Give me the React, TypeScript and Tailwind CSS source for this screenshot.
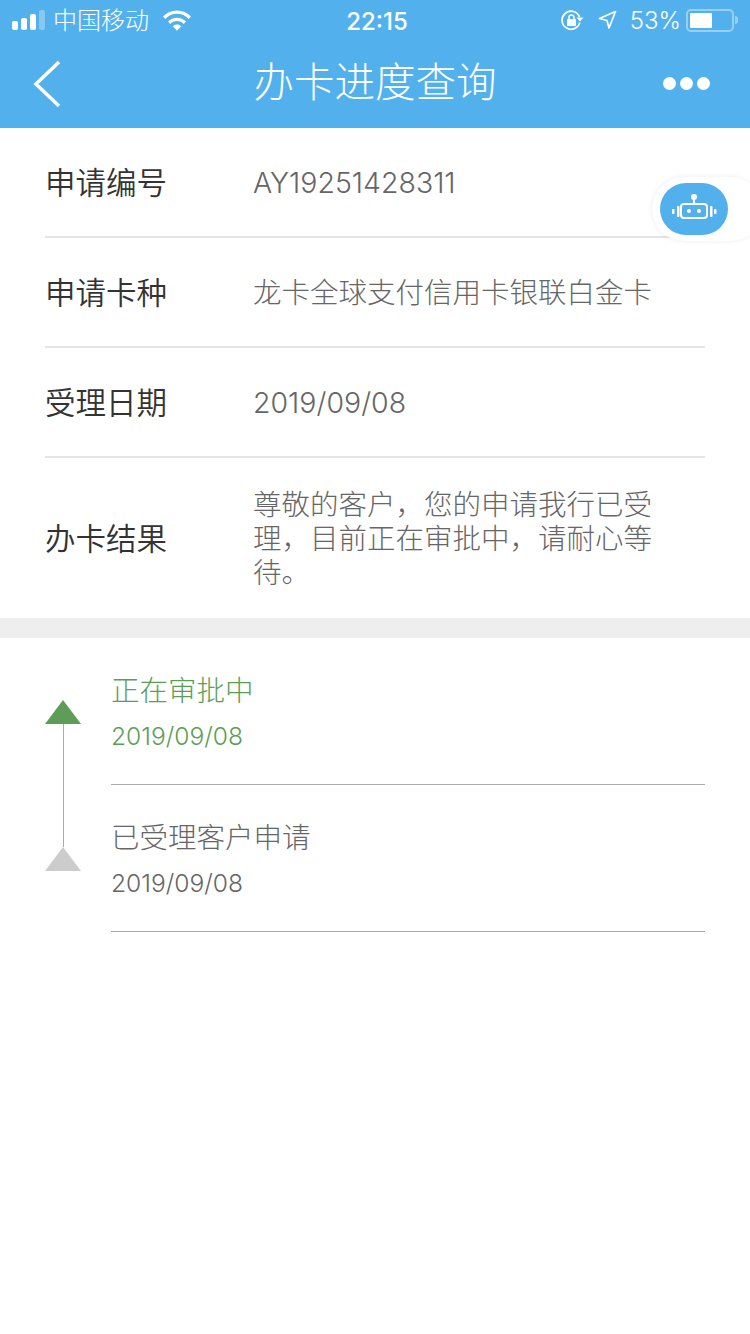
const font = "[font-family:'Inter','Noto_Sans_CJK_SC',sans-serif]";

const rows = [
  { label: "申请编号", value: "AY19251428311" },
  { label: "申请卡种", value: "龙卡全球支付信用卡银联白金卡" },
  { label: "受理日期", value: "2019/09/08" },
];

const SignalBars = () => (
  <svg width="34" height="20" viewBox="0 0 34 20" fill="#fff">
    <rect x="0" y="11" width="6" height="9" rx="2" />
    <rect x="9" y="8" width="6" height="12" rx="2" />
    <rect x="18" y="4" width="6" height="16" rx="2" />
    <rect x="27" y="0" width="6" height="20" rx="2" fillOpacity="0.3" />
  </svg>
);

const Wifi = () => (
  <svg width="28" height="21" viewBox="0 0 28 21" fill="#fff">
    <path d="M0 6.500C3.600 2.600 8.600.4 14 .4s10.400 2.200 14 6.100l-2.300 2.400C22.700 5.700 18.500 3.800 14 3.800S5.300 5.700 2.300 8.900z" />
    <path d="M5 11.500c2.400-2.500 5.600-3.800 9-3.800s6.600 1.300 9 3.800l-2.400 2.400c-1.800-1.800-4.100-2.800-6.600-2.800s-4.800 1-6.600 2.800z" />
    <path d="M9.800 16.200c1.100-1.100 2.600-1.700 4.200-1.700s3.100.6 4.200 1.700L14 20.800z" />
  </svg>
);

const RotationLock = () => (
  <svg width="23" height="21" viewBox="0 0 23 21" fill="none">
    <path d="M18.800 12.500A9 9 0 1 1 18.500 7" stroke="#fff" strokeWidth="1.700" />
    <path d="M15.500 7.500h7l-3.500 4z" fill="#fff" />
    <rect x="6" y="9" width="9" height="7" rx="1" fill="#fff" />
    <path d="M8 9.500V7.500a2.500 2.500 0 0 1 5 0v2" stroke="#fff" strokeWidth="1.500" />
  </svg>
);

const LocationArrow = () => (
  <svg width="19" height="20" viewBox="0 0 19 20" fill="none">
    <path d="M17.500 1.500L1.500 8.500l7.500 2 2 7.500z" stroke="#fff" strokeWidth="1.700" strokeLinejoin="round" />
  </svg>
);

const Battery = () => (
  <div className="flex items-center">
    <div className="w-[48px] h-[23px] rounded-[5px] border-2 border-white/40 p-[2px]">
      <div className="w-[22px] h-full bg-white rounded-[1px]" />
    </div>
    <div className="w-[3px] h-[8px] ml-[1px] bg-white/40 rounded-r-sm" />
  </div>
);

const RobotIcon = () => (
  <svg width="46" height="34" viewBox="0 0 46 34" fill="none">
    <circle cx="23" cy="5" r="3" fill="#fff" />
    <path d="M23 7v5" stroke="#fff" strokeWidth="2" />
    <rect x="10" y="12" width="26" height="14" rx="3" stroke="#fff" strokeWidth="2" />
    <circle cx="18" cy="19" r="2" fill="#fff" />
    <circle cx="28" cy="19" r="2" fill="#fff" />
    <rect x="6" y="14" width="2.500" height="11" rx="1" fill="#fff" />
    <rect x="1" y="17" width="2.500" height="5" rx="1" fill="#fff" />
    <rect x="39" y="14" width="2.500" height="11" rx="1" fill="#fff" />
    <rect x="43" y="17" width="2.500" height="5" rx="1" fill="#fff" />
  </svg>
);

const Triangle = ({ className }: { className: string }) => (
  <div
    className={`w-0 h-0 border-x-[18px] border-x-transparent border-b-[24px] ${className}`}
  />
);

export default function App() {
  return (
    <div className={`relative w-[750px] h-[1334px] bg-white overflow-hidden ${font}`}>
      <header className="bg-[#52b1ec] h-[128px] text-white">
        <div className="relative h-[40px] flex items-center justify-between pl-[12px] pr-[12px]">
          <div className="flex items-center">
            <SignalBars />
            <span className="ml-[7px] pt-[2px] text-[24px] leading-none font-light">中国移动</span>
            <span className="ml-[14px]"><Wifi /></span>
          </div>
          <div className="absolute left-[4px] right-0 pt-[4px] text-center text-[24px] leading-none font-medium">22:15</div>
          <div className="flex items-center">
            <RotationLock />
            <span className="ml-[14px]"><LocationArrow /></span>
            <span className="ml-[13px] pt-[2px] text-[24px] leading-none font-light">53%</span>
            <span className="ml-[5px]"><Battery /></span>
          </div>
        </div>
        <div className="relative h-[88px] flex items-center justify-between pl-[32px] pr-[40px] pb-[2px]">
          <svg width="30" height="48" viewBox="0 0 30 48" fill="none" className="mt-[2px]">
            <path d="M27 2L4 24l23 22" stroke="#fff" strokeWidth="3.500" />
          </svg>
          <h1 className="absolute left-0 right-0 text-center text-[40.500px] leading-none font-light">办卡进度查询</h1>
          <div className="flex gap-[4px]">
            <span className="w-[13px] h-[13px] rounded-full bg-white" />
            <span className="w-[13px] h-[13px] rounded-full bg-white" />
            <span className="w-[13px] h-[13px] rounded-full bg-white" />
          </div>
        </div>
      </header>

      <section className="px-[45px]">
        {rows.map((row) => (
          <div key={row.label} className="h-[110px] flex items-center border-b-2 border-[#e4e4e4] pb-[2px]">
            <div className="w-[208px] pt-[4px] text-[30.500px] font-[350] text-[#333]">{row.label}</div>
            <div className="flex-1 pt-[4px] text-[28.500px] text-[#666] font-light">{row.value}</div>
          </div>
        ))}
        <div className="h-[160px] flex items-center">
          <div className="w-[208px] pt-[1px] text-[30.500px] font-[350] text-[#333]">办卡结果</div>
          <div className="w-[410px] pt-[2px] text-[28.500px] leading-[34px] text-[#666] font-light">
            尊敬的客户，您的申请我行已受理，目前正在审批中，请耐心等待。
          </div>
        </div>
      </section>

      <div className="h-[20px] bg-[#eeeeee]" />

      <section className="flex pl-[45px] pr-[45px]">
        <div className="w-[36px] pt-[62px] flex flex-col items-center">
          <Triangle className="border-b-[#5c9e58]" />
          <div className="w-px h-[123px] bg-[#aaaaaa]" />
          <Triangle className="border-b-[#cccccc]" />
        </div>
        <div className="ml-[30px] flex-1">
          <div className="h-[147px] pt-[33px] border-b border-[#aaaaaa] text-[#5c9e58]">
            <div className="text-[28.500px] leading-[40px] font-light">正在审批中</div>
            <div className="mt-[5px] text-[24.600px] leading-[40px] font-light">2019/09/08</div>
          </div>
          <div className="h-[147px] pt-[33px] border-b border-[#aaaaaa] text-[#666]">
            <div className="text-[28.500px] leading-[40px] font-light">已受理客户申请</div>
            <div className="mt-[5px] text-[24.600px] leading-[40px] font-light">2019/09/08</div>
          </div>
        </div>
      </section>

      <div className="absolute left-[652px] top-[177px] w-[110px] h-[64px] rounded-[32px] bg-white shadow-[0_0_5px_rgba(0,0,0,0.08)] flex items-center pl-[8px]">
        <div className="w-[68px] h-[52px] rounded-[26px] bg-[#52b1ec] flex items-center justify-center">
          <RobotIcon />
        </div>
      </div>
    </div>
  );
}
